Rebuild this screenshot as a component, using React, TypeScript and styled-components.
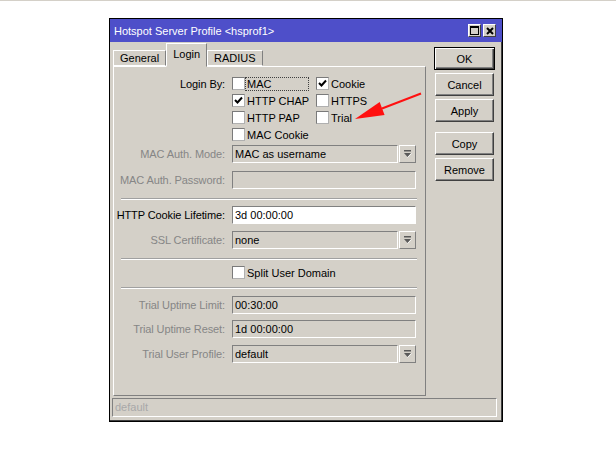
import * as React from 'react';
import styled, { createGlobalStyle } from "styled-components";

const GlobalStyle = createGlobalStyle`
    html, body {
        margin: 0;
        padding: 0;
        background: #fff;
    }
    body {
        font-family: "Liberation Sans", Arial, sans-serif;
        font-size: 11px;
        color: #000;
    }
`

const Page = styled.div`
    position: relative;
    width: 616px;
    height: 472px;
    box-sizing: border-box;
    border-top: 1px solid #d4d0c8;
    padding: 17px 0 0 109px;
`

const Window = styled.div`
    width: 394px;
    height: 404px;
    box-sizing: border-box;
    border: 1px solid #000;
    box-shadow: inset -1px -1px 0 #404040;
    background: #d4d0c8;
    display: flex;
    flex-direction: column;
`

const TitleBar = styled.div`
    height: 23px;
    flex: none;
    background: #4e4fc9;
    color: #fff;
    display: flex;
    align-items: center;
    justify-content: space-between;
    padding: 0 6px 0 4px;
    font-size: 11px;
`

const TitleButtons = styled.div`
    display: flex;
    gap: 2px;
`

const TitleButton = styled.div`
    width: 13px;
    height: 13px;
    box-sizing: border-box;
    background: #d4d0c8;
    border: 1px solid;
    border-color: #fff #404040 #404040 #fff;
    display: flex;
    align-items: center;
    justify-content: center;
`

const Body = styled.div`
    display: flex;
    height: 354px;
    padding-left: 3px;
`

const LeftColumn = styled.div`
    width: 313px;
    display: flex;
    flex-direction: column;
`

const TabRow = styled.div`
    height: 24px;
    display: flex;
    align-items: flex-end;
`

const Tab = styled.div<{ $active?: boolean }>`
    position: relative;
    z-index: 1;
    box-sizing: border-box;
    height: ${p => p.$active ? 24 : 16}px;
    margin-bottom: ${p => p.$active ? -1 : 0}px;
    padding: ${p => p.$active ? '0 6px 3px' : '0 6px'};
    display: flex;
    align-items: center;
    background: #d4d0c8;
    border: 1px solid;
    border-color: #fff #808080 ${p => p.$active ? 'transparent' : '#fff'} #fff;
`

const Panel = styled.div`
    position: relative;
    height: 330px;
    box-sizing: border-box;
    border: 1px solid;
    border-color: #fff #808080 #808080 #fff;
    padding-top: 8px;
    display: flex;
    flex-direction: column;
`

const CheckGrid = styled.div`
    display: grid;
    grid-template-columns: 111px 77px auto;
    grid-auto-rows: 17px;
    column-gap: 7px;
`

const Label = styled.div<{ $disabled?: boolean }>`
    text-align: right;
    white-space: nowrap;
    align-self: center;
    letter-spacing: -0.1px;
    color: ${p => p.$disabled ? '#868686' : '#000'};
`

const CheckItem = styled.div`
    display: flex;
    align-items: center;
`

const Box = styled.div`
    width: 13px;
    height: 13px;
    flex: none;
    box-sizing: border-box;
    background: #fff;
    border: 1px solid;
    border-color: #7a7a7a #b0b0b0 #b0b0b0 #7a7a7a;
    display: flex;
    align-items: center;
    justify-content: center;
`

const CheckText = styled.span<{ $focus?: boolean }>`
    box-sizing: border-box;
    height: 14px;
    line-height: 12px;
    padding: 0 1px;
    border: 1px ${p => p.$focus ? 'dotted #404040' : 'solid transparent'};
    width: ${p => p.$focus ? '64px' : 'auto'};
    white-space: nowrap;
`

const FieldRow = styled.div<{ $mt: number }>`
    display: grid;
    grid-template-columns: 111px 184px;
    column-gap: 7px;
    height: 18px;
    margin-top: ${p => p.$mt}px;
`

const CheckRow = styled(FieldRow)`
    height: 17px;
`

const Input = styled.div<{ $disabled?: boolean }>`
    flex: 1;
    height: 18px;
    box-sizing: border-box;
    border: 1px solid;
    border-color: #808080 #fff #fff #808080;
    box-shadow: ${p => p.$disabled ? 'inset 1px 1px 0 #d4d0c8' : 'none'};
    background: ${p => p.$disabled ? '#d4d0c8' : '#fff'};
    padding: 0 2px;
    line-height: 16px;
    white-space: nowrap;
    overflow: hidden;
`

const Combo = styled.div`
    display: flex;
`

const DropButton = styled.div`
    width: 17px;
    height: 18px;
    margin-left: 1px;
    box-sizing: border-box;
    border: 1px solid;
    border-color: #fff #808080 #808080 #fff;
    display: flex;
    align-items: center;
    justify-content: center;
`

const Separator = styled.div<{ $mt: number }>`
    height: 0;
    border-top: 1px solid #a0a0a0;
    border-bottom: 1px solid #fff;
    margin: ${p => p.$mt}px 8px 0 7px;
`

const RightColumn = styled.div`
    width: 61px;
    margin-left: 8px;
    padding-top: 5px;
    display: flex;
    flex-direction: column;
`

const Button = styled.div<{ $default?: boolean; $mt: number }>`
    height: 23px;
    box-sizing: border-box;
    margin-top: ${p => p.$mt}px;
    margin-left: ${p => p.$default ? 0 : 1}px;
    margin-right: ${p => p.$default ? 0 : 1}px;
    border: 1px solid;
    border-color: ${p => p.$default ? '#000' : '#fff #404040 #404040 #fff'};
    box-shadow: ${p => p.$default
        ? 'inset 1px 1px 0 #fff, inset -1px -1px 0 #404040, inset -2px -2px 0 #808080'
        : 'inset -1px -1px 0 #808080'};
    display: flex;
    align-items: center;
    justify-content: center;
`

const StatusBar = styled.div`
    height: 19px;
    margin: 2px 5px 0 2px;
    box-sizing: border-box;
    border: 1px solid;
    border-color: #808080 #fff #fff #808080;
    color: #a8a8a8;
    padding: 0 2px;
    line-height: 17px;
`

const Overlay = styled.svg`
    position: absolute;
    left: 0;
    top: 0;
    pointer-events: none;
`

const Check = () => (
    <svg width="9" height="9" viewBox="0 0 9 9">
        <path d="M1 4 L3.5 6.5 L8 1.5" fill="none" stroke="#000" strokeWidth="2" />
    </svg>
)

const DropIcon = () => (
    <svg width="9" height="8" viewBox="0 0 9 8">
        <rect x="1" y="0" width="7" height="1.5" fill="#5a5a5a" />
        <path d="M1 3 H8 L4.5 7 Z" fill="#5a5a5a" />
        <path d="M4.5 7.5 L8.5 3.5" stroke="#fff" strokeWidth="0.8" />
    </svg>
)

function CheckBox({ label, checked, focus }: { label: string, checked?: boolean, focus?: boolean }) {
    return (
        <CheckItem>
            <Box>{checked && <Check />}</Box>
            <CheckText $focus={focus}>{label}</CheckText>
        </CheckItem>
    )
}

function ComboField({ value }: { value: string }) {
    return (
        <Combo>
            <Input $disabled>{value}</Input>
            <DropButton><DropIcon /></DropButton>
        </Combo>
    )
}

export default function App() {
    return (
        <>
            <GlobalStyle />
            <Page>
                <Window>
                    <TitleBar>
                        <span>Hotspot Server Profile &lt;hsprof1&gt;</span>
                        <TitleButtons>
                            <TitleButton>
                                <svg width="9" height="9" viewBox="0 0 9 9">
                                    <rect x="0.5" y="0.5" width="8" height="8" fill="none" stroke="#000" />
                                    <rect x="0" y="0" width="9" height="2" fill="#000" />
                                </svg>
                            </TitleButton>
                            <TitleButton>
                                <svg width="8" height="8" viewBox="0 0 8 8">
                                    <path d="M1 1 L7 7 M7 1 L1 7" stroke="#000" strokeWidth="2" />
                                </svg>
                            </TitleButton>
                        </TitleButtons>
                    </TitleBar>
                    <Body>
                        <LeftColumn>
                            <TabRow>
                                <Tab>General</Tab>
                                <Tab $active>Login</Tab>
                                <Tab>RADIUS</Tab>
                            </TabRow>
                            <Panel>
                                <CheckGrid>
                                    <Label>Login By:</Label>
                                    <CheckBox label="MAC" focus />
                                    <CheckBox label="Cookie" checked />
                                    <div />
                                    <CheckBox label="HTTP CHAP" checked />
                                    <CheckBox label="HTTPS" />
                                    <div />
                                    <CheckBox label="HTTP PAP" />
                                    <CheckBox label="Trial" />
                                    <div />
                                    <CheckBox label="MAC Cookie" />
                                </CheckGrid>

                                <FieldRow $mt={2}>
                                    <Label $disabled>MAC Auth. Mode:</Label>
                                    <ComboField value="MAC as username" />
                                </FieldRow>
                                <FieldRow $mt={8}>
                                    <Label $disabled>MAC Auth. Password:</Label>
                                    <Input $disabled />
                                </FieldRow>

                                <Separator $mt={9} />

                                <FieldRow $mt={6}>
                                    <Label>HTTP Cookie Lifetime:</Label>
                                    <Input>3d 00:00:00</Input>
                                </FieldRow>
                                <FieldRow $mt={7}>
                                    <Label $disabled>SSL Certificate:</Label>
                                    <ComboField value="none" />
                                </FieldRow>

                                <Separator $mt={9} />

                                <CheckRow $mt={4}>
                                    <div />
                                    <CheckBox label="Split User Domain" />
                                </CheckRow>

                                <Separator $mt={6} />

                                <FieldRow $mt={7}>
                                    <Label $disabled>Trial Uptime Limit:</Label>
                                    <Input $disabled>00:30:00</Input>
                                </FieldRow>
                                <FieldRow $mt={6}>
                                    <Label $disabled>Trial Uptime Reset:</Label>
                                    <Input $disabled>1d 00:00:00</Input>
                                </FieldRow>
                                <FieldRow $mt={7}>
                                    <Label $disabled>Trial User Profile:</Label>
                                    <ComboField value="default" />
                                </FieldRow>
                            </Panel>
                        </LeftColumn>
                        <RightColumn>
                            <Button $default $mt={0}>OK</Button>
                            <Button $mt={3}>Cancel</Button>
                            <Button $mt={3}>Apply</Button>
                            <Button $mt={10}>Copy</Button>
                            <Button $mt={3}>Remove</Button>
                        </RightColumn>
                    </Body>
                    <StatusBar>default</StatusBar>
                </Window>
                <Overlay width="616" height="472">
                    <line x1="421" y1="92.5" x2="382" y2="107.5" stroke="#ff1010" strokeWidth="2" />
                    <path d="M355 118 L384.6 114.1 L379.7 100.9 Z" fill="#ff1010" />
                </Overlay>
            </Page>
        </>
    )
}
